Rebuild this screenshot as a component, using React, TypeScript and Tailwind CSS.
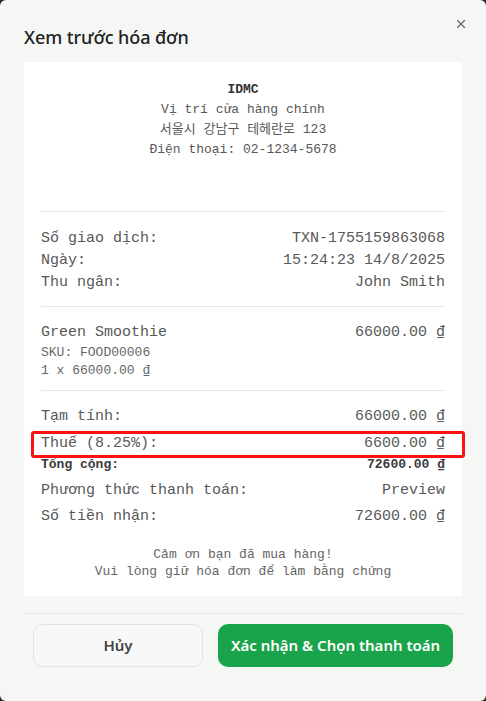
import { X } from 'lucide-react';

const mono = { fontFamily: '"Liberation Mono", "Courier New", "Noto Sans CJK KR", monospace' };

function Row({ label, value, className = '' }: { label: string; value: string; className?: string }) {
  return (
    <div className={`flex justify-between ${className}`}>
      <span>{label}</span>
      <span>{value}</span>
    </div>
  );
}

export default function App() {
  return (
    <div className="w-[486px] h-[701px] bg-[#2a2a2a]">
      <div
        className="relative w-full h-full bg-[#f5f7f5] rounded-[6px] flex flex-col"
        style={{ fontFamily: '"Noto Sans", "Open Sans", sans-serif' }}
      >
        {/* Close */}
        <button className="absolute right-[18px] top-[17px] text-[#666]">
          <X className="w-[14px] h-[14px]" strokeWidth={2} />
        </button>

        {/* Header */}
        <h2 className="pt-[26px] px-6 text-[18px] leading-[22px] font-medium text-[#222] tracking-[-0.1px]">
          Xem trước hóa đơn
        </h2>

        {/* Receipt */}
        <div className="mx-6 mt-[14px] bg-white px-[17px] pt-[18px] pb-[16px] text-[#585858]" style={mono}>
          <div className="text-center text-[13px] leading-5">
            <div className="font-bold text-[#333]">IDMC</div>
            <div>Vị trí cửa hàng chính</div>
            <div>서울시 강남구 테헤란로 123</div>
            <div>Điện thoại: 02-1234-5678</div>
          </div>

          <div className="mt-[51px] border-t border-[#e3e8ee]" />

          <div className="pt-[16px] pb-[12px] text-[15px] leading-[22px]">
            <Row label="Số giao dịch:" value="TXN-1755159863068" />
            <Row label="Ngày:" value="15:24:23 14/8/2025" />
            <Row label="Thu ngân:" value="John Smith" />
          </div>

          <div className="border-t border-[#e3e8ee]" />

          <div className="pt-[15px] pb-[10px]">
            <Row label="Green Smoothie" value="66000.00 ₫" className="text-[15px] leading-[22px]" />
            <div className="text-[13px] leading-[18px] text-[#666]">SKU: FOOD00006</div>
            <div className="text-[13px] leading-[18px] text-[#666]">1 x 66000.00 ₫</div>
          </div>

          <div className="border-t border-[#e3e8ee]" />

          <div className="pt-[15px] text-[15px] leading-[22px]">
            <Row label="Tạm tính:" value="66000.00 ₫" />
            <div className="relative mt-[5px]">
              <Row label="Thuế (8.25%):" value="6600.00 ₫" />
              <div className="absolute left-[-10px] right-[-20px] top-[-2px] bottom-[-3px] border-[3px] border-[#ff1010] rounded-[3px]" />
            </div>
            <Row label="Tổng cộng:" value="72600.00 ₫" className="text-[13px] leading-5 font-bold text-[#3a3a3a]" />
            <Row label="Phương thức thanh toán:" value="Preview" className="mt-[5px]" />
            <Row label="Số tiền nhận:" value="72600.00 ₫" className="mt-[4px]" />
          </div>

          <div className="mt-[18px] text-center text-[13px] leading-[17px] text-[#666]">
            <div>Cảm ơn bạn đã mua hàng!</div>
            <div>Vui lòng giữ hóa đơn để làm bằng chứng</div>
          </div>
        </div>

        {/* Footer */}
        <div className="mx-6 mt-[17px] border-t border-[#e4e6e4] pt-[10px] px-[9px] flex gap-[15px]">
          <button className="w-[170px] h-[43px] rounded-[10px] border border-[#e2e4e2] bg-[#f7f8f7] text-[15px] font-semibold text-[#444]">
            Hủy
          </button>
          <button className="flex-1 h-[43px] rounded-[10px] bg-[#19a34a] text-[15px] font-semibold text-white">
            Xác nhận &amp; Chọn thanh toán
          </button>
        </div>
      </div>
    </div>
  );
}
